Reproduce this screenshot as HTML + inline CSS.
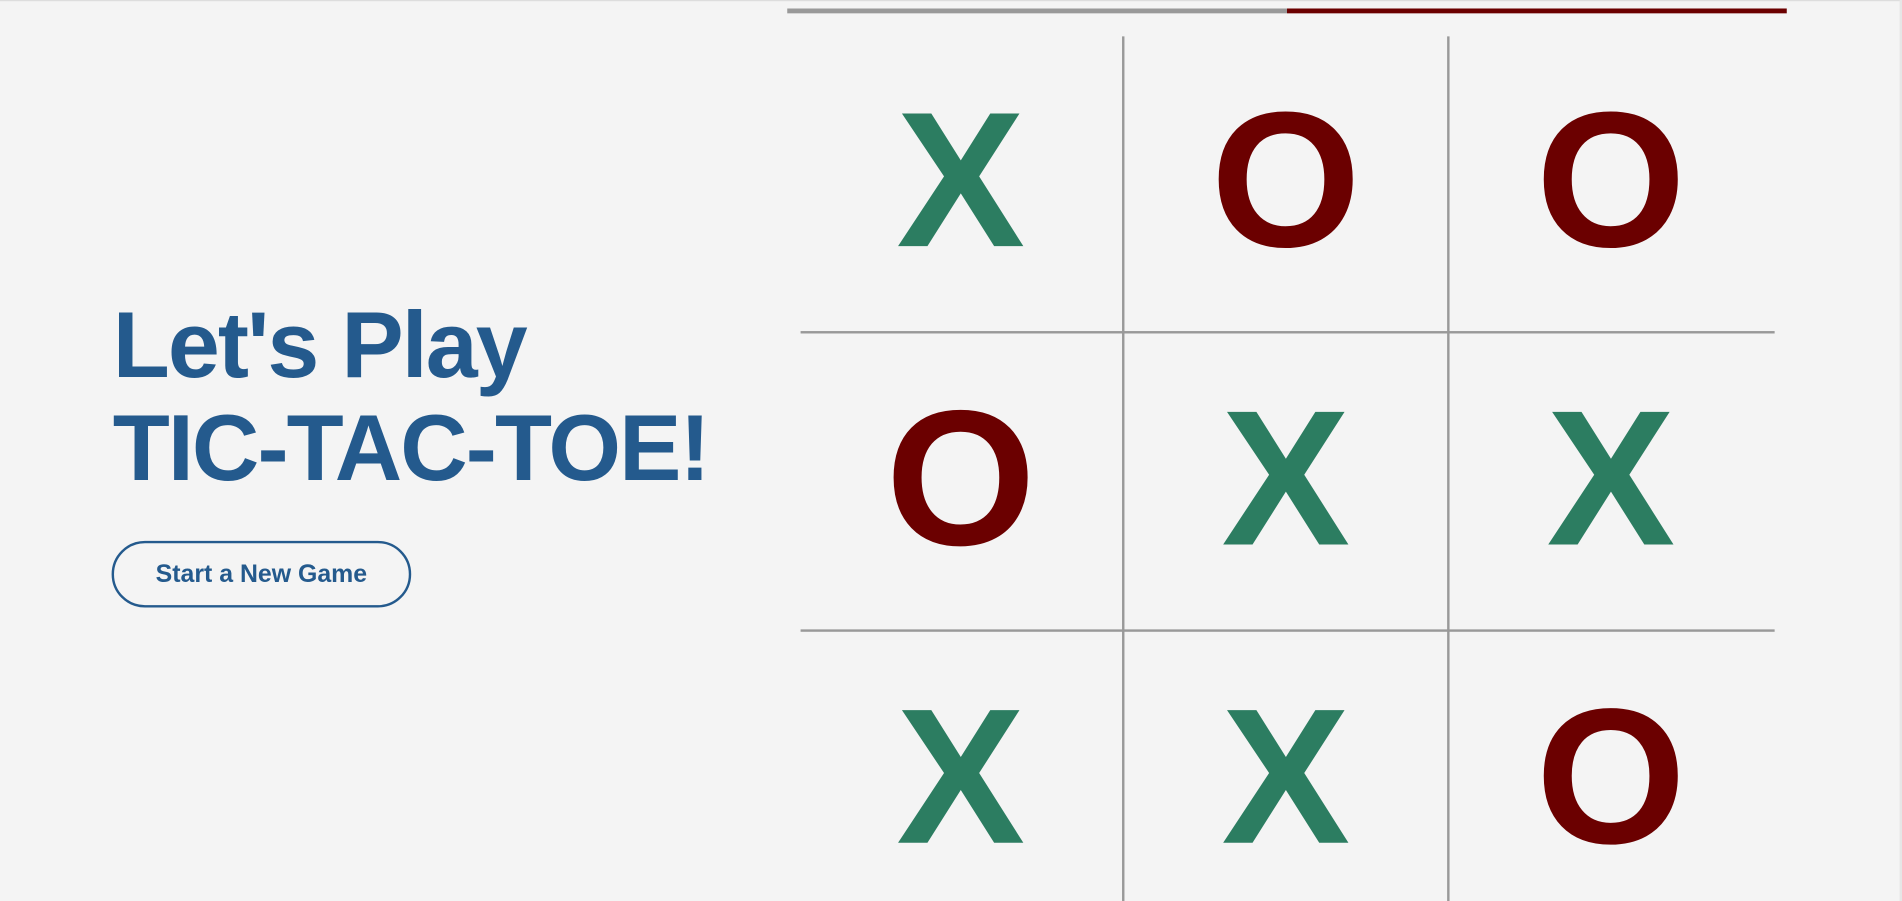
<!DOCTYPE html>
<html><head><style>
html,body{margin:0;padding:0;background:#f4f4f4;overflow:hidden;width:1902px;height:901px}
#w{position:absolute;left:0;top:0;width:1568px;height:743px;transform:scale(1.21301,1.21265);transform-origin:0 0;font-family:"Liberation Sans",Arial,sans-serif;font-weight:bold}
.a{position:absolute}
.t{color:#245a8d;font-size:77px;line-height:85px;left:93px;white-space:nowrap;letter-spacing:-1.6px}
.m{position:absolute;width:260px;height:200px;line-height:200px;text-align:center;font-size:159px;margin-left:-130px}
.x{color:#2c7d61}.o{color:#6b0000}
.v{position:absolute;width:2px;background:#999;top:30px;height:713px}
.h{position:absolute;height:2px;background:#999;left:660px;width:803px}
</style></head><body><div id="w">
<div class="a" style="left:0;top:0;width:1568px;height:1px;background:#ddd"></div>
<div class="a" style="left:1566px;top:0;width:2px;height:743px;background:#e6e6e6"></div>
<div class="a" style="left:649px;top:7px;width:412px;height:4px;background:#999"></div>
<div class="a" style="left:1061px;top:7px;width:412px;height:4px;background:#6b0000"></div>
<div class="t a" style="top:243px">Let's Play</div>
<div class="t a" style="top:328px">TIC-TAC-TOE!</div>
<div class="a" style="left:92px;top:446px;width:243px;height:51px;border:2px solid #245a8d;border-radius:28px;color:#245a8d;font-size:20.5px;line-height:51px;text-align:center">Start a New Game</div>
<div class="v" style="left:925px"></div>
<div class="v" style="left:1193px"></div>
<div class="h" style="top:273px"></div>
<div class="h" style="top:519px"></div>
<div class="m x" style="left:792px;top:48px">X</div>
<div class="m o" style="left:1060px;top:48px">O</div>
<div class="m o" style="left:1328px;top:48px">O</div>
<div class="m o" style="left:792px;top:294px">O</div>
<div class="m x" style="left:1060px;top:294px">X</div>
<div class="m x" style="left:1328px;top:294px">X</div>
<div class="m x" style="left:792px;top:540px">X</div>
<div class="m x" style="left:1060px;top:540px">X</div>
<div class="m o" style="left:1328px;top:540px">O</div>
</div></body></html>
